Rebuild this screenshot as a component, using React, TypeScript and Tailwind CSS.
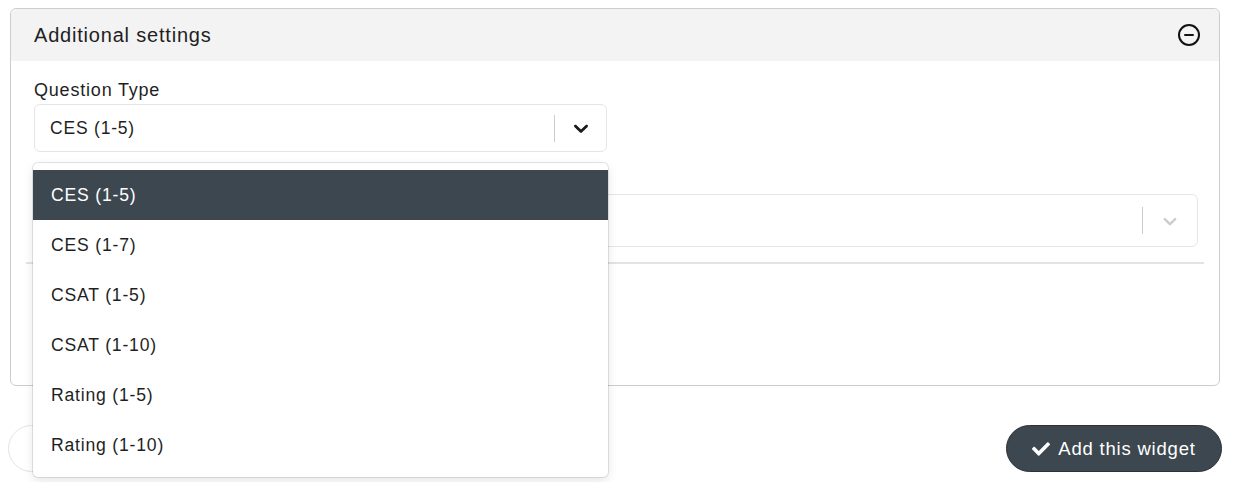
import React from "react";
import { CircleMinus } from "lucide-react";
import { FaCheck } from "react-icons/fa";

const options = ["CES (1-5)", "CES (1-7)", "CSAT (1-5)", "CSAT (1-10)", "Rating (1-5)", "Rating (1-10)"];

function Chevron({ className }: { className?: string }) {
  return (
    <svg viewBox="0 0 20 20" className={className} fill="currentColor" aria-hidden="true">
      <path d="M4.516 7.548c0.436-0.446 1.043-0.481 1.576 0l3.908 3.747 3.908-3.747c0.533-0.481 1.141-0.446 1.574 0 0.436 0.445 0.408 1.197 0 1.615-0.406 0.418-4.695 4.502-4.695 4.502-0.217 0.223-0.502 0.335-0.787 0.335s-0.57-0.112-0.789-0.335c0 0-4.287-4.084-4.695-4.502s-0.436-1.17 0-1.615z" />
    </svg>
  );
}

export default function App() {
  const selected = "CES (1-5)";

  return (
    <div className="min-h-screen bg-white pt-2 font-['Liberation_Sans',Arial,sans-serif] text-[#1f1f1f] tracking-[0.8px]">
      <div className="ml-[8px] w-[1214px]">
        {/* Settings card */}
        <div className="mx-[2px] rounded-[6px] border border-[#cdcdcd]">
          <div className="flex h-[52px] items-center justify-between rounded-t-[6px] bg-[#f3f3f3] pl-[23px] pr-[18px]">
            <span className="text-[20px]">Additional settings</span>
            <CircleMinus className="h-[24px] w-[24px] text-[#111]" strokeWidth={2} />
          </div>

          <div className="px-[23px] pt-[18px] pb-[121px]">
            <label className="block text-[18px] leading-[22px]">Question Type</label>

            <div className="relative mt-[3px] w-[573px]">
              <div className="flex h-[48px] items-center rounded-[6px] border border-[#e6e6e6] bg-white pl-[15px]">
                <span className="flex-1 text-[17.5px]">{selected}</span>
                <span className="h-[27px] w-px bg-[#cccccc]" />
                <span className="flex w-[51px] items-center justify-center text-[#1a1a1a]">
                  <Chevron className="h-[24px] w-[24px]" />
                </span>
              </div>

              {/* Open menu */}
              <div className="absolute left-[-1px] right-[-1px] top-full z-10 mt-[11px] rounded-[5px] bg-white py-[7px] shadow-[0_0_0_1px_rgba(0,0,0,0.1),0_4px_11px_rgba(0,0,0,0.1)]">
                {options.map((opt) => (
                  <div
                    key={opt}
                    className={`flex h-[50px] items-center pl-[18px] text-[17.6px] ${
                      opt === selected ? "bg-[#3d4750] text-white" : "text-[#1f1f1f]"
                    }`}
                  >
                    {opt}
                  </div>
                ))}
              </div>
            </div>

            {/* second field, its label sits under the open menu */}
            <div className="mt-[16px] h-[22px]" />
            <div className="mt-[4px] mr-[-2px] flex h-[53px] items-center rounded-[6px] border border-[#e6e6e6] bg-white pl-[15px]">
              <span className="flex-1" />
              <span className="h-[27px] w-px bg-[#cccccc]" />
              <span className="flex w-[54px] items-center justify-center text-[#cccccc]">
                <Chevron className="h-[22px] w-[22px]" />
              </span>
            </div>

            <div className="mt-[15px] mx-[-8px] h-[2px] bg-[#e3e3e3]" />
          </div>
        </div>

        {/* Footer actions */}
        <div className="mt-[39px] flex items-center justify-between">
          <button className="h-[47px] w-[130px] rounded-full border border-[#e3e3e3] bg-white" />
          <button className="flex h-[47px] w-[216px] items-center justify-center gap-[8px] rounded-full border border-[#2a3138] bg-[#3d4750] text-[18.5px] text-white">
            <FaCheck className="h-[18px] w-[18px]" />
            Add this widget
          </button>
        </div>
      </div>
    </div>
  );
}
